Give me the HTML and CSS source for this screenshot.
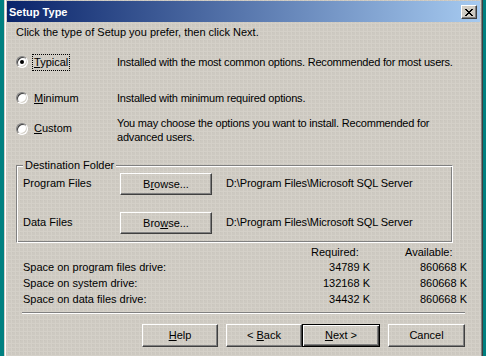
FILE: index.html
```html
<!DOCTYPE html>
<html lang="en">
<head>
    <meta charset="UTF-8">
    <title>Setup Type</title>
    <link rel="stylesheet" href="styles.css">
</head>
<body>
    <div class="window">
        <div class="titlebar">
            <span class="title">Setup Type</span>
            <span class="close-btn">
                <svg width="8" height="7" viewBox="0 0 8 7" shape-rendering="crispEdges">
                    <path fill="#000" d="M0 0h2v1H0zM6 0h2v1H6zM1 1h2v1H1zM5 1h2v1H5zM2 2h4v1H2zM3 3h2v1H3zM2 4h4v1H2zM1 5h2v1H1zM5 5h2v1H5zM0 6h2v1H0zM6 6h2v1H6z"/>
                </svg>
            </span>
        </div>

        <div class="content">
            <p class="intro">Click the type of Setup you prefer, then click Next.</p>

            <!-- setup options -->
            <div class="option option-typical">
                <div class="choice">
                    <span class="radio checked"></span>
                    <span class="choice-label focused"><u>T</u>ypical</span>
                </div>
                <div class="desc">Installed with the most common options. Recommended for most users.</div>
            </div>
            <div class="option option-minimum">
                <div class="choice">
                    <span class="radio"></span>
                    <span class="choice-label"><u>M</u>inimum</span>
                </div>
                <div class="desc">Installed with minimum required options.</div>
            </div>
            <div class="option option-custom">
                <div class="choice">
                    <span class="radio"></span>
                    <span class="choice-label"><u>C</u>ustom</span>
                </div>
                <div class="desc">You may choose the options you want to install. Recommended for<br>advanced users.</div>
            </div>

            <!-- destination folder -->
            <fieldset class="group">
                <legend>Destination Folder</legend>
                <div class="folder-row">
                    <span class="folder-label">Program Files</span>
                    <span class="btn btn-browse"><span>B<u>r</u>owse...</span></span>
                    <span class="folder-path">D:\Program Files\Microsoft SQL Server</span>
                </div>
                <div class="folder-row folder-row-data">
                    <span class="folder-label">Data Files</span>
                    <span class="btn btn-browse"><span>Bro<u>w</u>se...</span></span>
                    <span class="folder-path">D:\Program Files\Microsoft SQL Server</span>
                </div>
            </fieldset>

            <!-- disk space -->
            <div class="space">
                <span></span>
                <span class="space-head">Required:</span>
                <span class="space-head space-head-avail">Available:</span>

                <span>Space on program files drive:</span>
                <span class="num">34789 K</span>
                <span class="num">860668 K</span>

                <span>Space on system drive:</span>
                <span class="num">132168 K</span>
                <span class="num">860668 K</span>

                <span>Space on data files drive:</span>
                <span class="num">34432 K</span>
                <span class="num">860668 K</span>
            </div>

            <div class="separator"></div>

            <div class="buttons">
                <span class="btn btn-wizard"><span><u>H</u>elp</span></span>
                <div class="nav-pair">
                    <span class="btn btn-wizard"><span>&lt; <u>B</u>ack</span></span>
                    <span class="btn btn-wizard btn-default"><span><u>N</u>ext &gt;</span></span>
                </div>
                <span class="btn btn-wizard btn-cancel"><span>Cancel</span></span>
            </div>
        </div>
    </div>
</body>
</html>
```

FILE: styles.css
```css
* {
    margin: 0;
    padding: 0;
    box-sizing: border-box;
}

body {
    background: #008080;
    font-family: 'Liberation Sans', Arial, sans-serif;
    font-size: 11px;
    line-height: 13px;
    color: #000;
    overflow: hidden;
    height: 356px;
}

u {
    text-decoration: underline;
    text-underline-offset: 1px;
}

/* dithered 3D face, fixed so every panel lines up */
.window,
.btn,
.close-btn,
.group legend {
    background-color: #d4d0c8;
    background-image:
        conic-gradient(at 1px 1px, transparent 75%, #c9c5bd 0),
        conic-gradient(at 3px 3px, transparent 75%, #cdc9c1 0);
    background-size: 4px 4px, 4px 4px;
    background-position: 0 0, 0 0;
    background-attachment: fixed;
}

.window {
    width: 479px;
    height: 400px;
    margin: -2px 0 0 4px;
    border: 1px solid;
    border-color: #d4d0c8 #404040 #404040 #d4d0c8;
    box-shadow: inset 1px 1px #fff, inset -1px -1px #808080;
    padding: 2px;
}

.titlebar {
    height: 21px;
    display: flex;
    align-items: center;
    justify-content: space-between;
    padding: 0 3px 0 2px;
    background: linear-gradient(90deg, #0a246a 0%, #a6caf0 100%);
}

.title {
    color: #fff;
    font-weight: bold;
    padding-top: 1px;
}

.close-btn {
    width: 16px;
    height: 14px;
    margin-top: 1px;
    display: flex;
    align-items: center;
    justify-content: center;
    border: 1px solid;
    border-color: #fff #404040 #404040 #fff;
    box-shadow: inset -1px -1px #808080;
}

.close-btn svg {
    display: block;
}

.content {
    padding: 4px 15px 0 9px;
}

/* options */
.option {
    display: flex;
    align-items: center;
}

.option-typical {
    margin-top: 15px;
    height: 16px;
}

.option-minimum {
    margin-top: 21px;
    height: 14px;
}

.option-custom {
    margin-top: 11px;
    height: 28px;
}

.option-custom .choice {
    margin-top: -3px;
}

.desc {
    white-space: nowrap;
    letter-spacing: -0.2px;
}

.option-custom .desc {
    line-height: 14px;
}

.choice {
    width: 101px;
    flex-shrink: 0;
    display: flex;
    align-items: center;
}

.radio {
    width: 12px;
    height: 12px;
    border-radius: 50%;
    background: #fff;
    border: 1px solid;
    border-color: #808080 #fff #fff #808080;
    box-shadow: inset 1px 1px #404040, inset -1px -1px #d4d0c8;
    display: flex;
    align-items: center;
    justify-content: center;
    margin-right: 5px;
}

.radio.checked::after {
    content: '';
    width: 4px;
    height: 4px;
    border-radius: 50%;
    background: #000;
}

.choice-label {
    padding: 1px;
}

.choice-label.focused {
    outline: 1px dotted #000;
}

/* destination folder */
.group {
    width: 437px;
    margin-top: 14px;
    padding: 1px 6px 8px;
    border: 1px solid;
    border-color: #808080 #fff #fff #808080;
    box-shadow: inset 1px 1px #fff, inset -1px -1px #808080;
}

.group legend {
    padding: 0 2px;
    line-height: 14px;
}

.folder-row {
    display: flex;
    align-items: flex-start;
}

.folder-row-data {
    margin-top: 17px;
}

.folder-label {
    width: 97px;
    padding-top: 4px;
}

.folder-path {
    margin-left: 14px;
    padding-top: 4px;
    letter-spacing: -0.1px;
}

.btn {
    display: flex;
    align-items: center;
    justify-content: center;
    border: 1px solid;
    border-color: #fff #404040 #404040 #fff;
    box-shadow: inset -1px -1px #808080;
}

.btn-browse {
    width: 92px;
    height: 22px;
    padding-top: 1px;
}

/* disk space */
.space {
    display: grid;
    grid-template-columns: 288px 59px 97px;
    grid-template-rows: 13px 16px 16px 17px;
    margin: 3px 0 0 7px;
    align-items: center;
}

.space-head-avail {
    padding-left: 35px;
}

.num {
    text-align: right;
}

.separator {
    margin: 4px 0 0 6px;
    height: 2px;
    border-top: 1px solid #808080;
    border-bottom: 1px solid #fff;
}

.buttons {
    display: flex;
    justify-content: flex-end;
    gap: 8px;
    margin-top: 10px;
}

.nav-pair {
    display: flex;
}

.btn-wizard {
    width: 76px;
    height: 23px;
}

.btn-default {
    width: 78px;
    border: 1px solid #000;
    box-shadow: inset 1px 1px #fff, inset -1px -1px #404040, inset -2px -2px #808080;
}

.btn-cancel {
    width: 77px;
}
```
